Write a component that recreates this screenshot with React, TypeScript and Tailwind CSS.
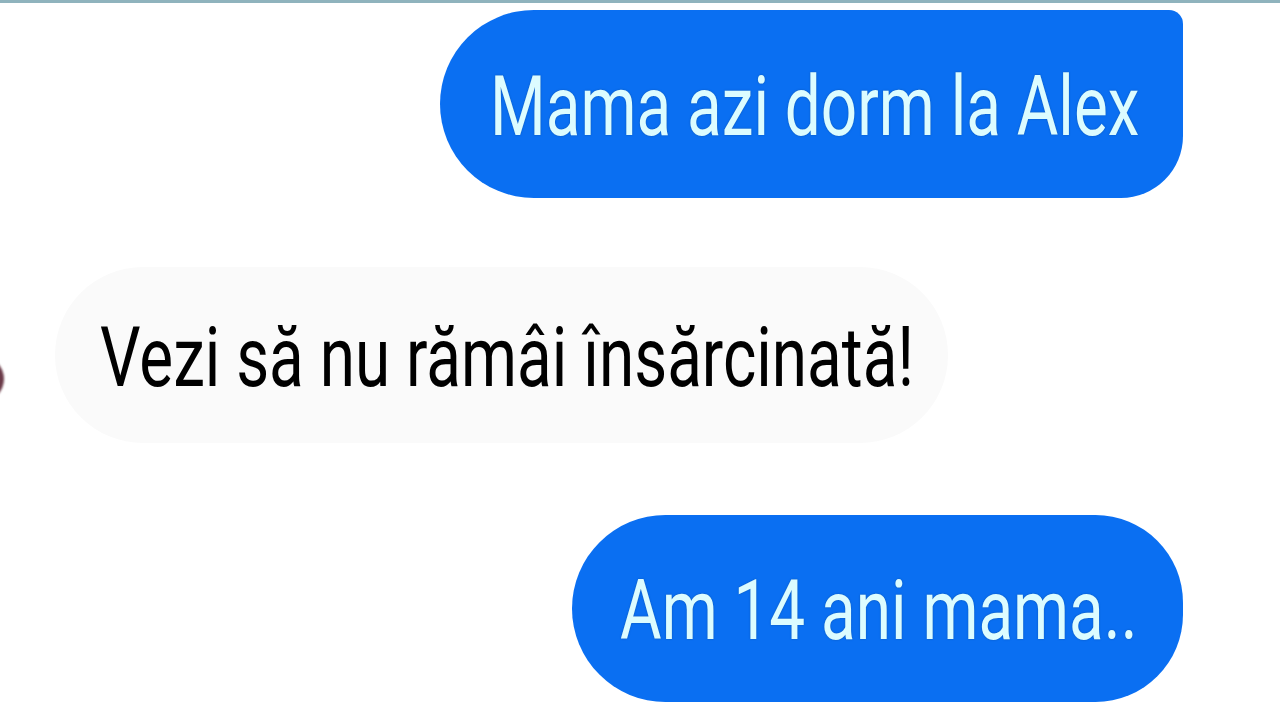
import React from 'react';

const blueText = "inline-block origin-left scale-x-[0.76] whitespace-nowrap text-[84px] leading-none text-[#dcfcff] [text-shadow:0_0_2px_#0a4fa8]";

export default function App() {
  return (
    <div className="relative w-[1280px] h-[720px] overflow-hidden bg-white font-['Roboto','Liberation_Sans',sans-serif]">
      <div className="h-[3px] bg-[#8fb3bd]" />

      {/* avatar sliver on the left edge */}
      <div className="absolute left-[-42px] top-[356px] w-[46px] h-[46px] rounded-full bg-[#6a3a48] blur-[1px]" />

      <div className="flex flex-col pt-[7px]">
        <div className="flex justify-end pr-[97px]">
          <div className="flex items-center w-[743px] h-[188px] pl-[50px] pt-[6px] bg-[#0a6ff2] rounded-l-[94px] rounded-tr-[14px] rounded-br-[62px]">
            <span className={blueText}>Mama azi dorm la Alex</span>
          </div>
        </div>

        <div className="flex justify-start pl-[55px] mt-[69px]">
          <div className="flex items-center w-[893px] h-[176px] pl-[45px] pt-[6px] bg-[#fafafa] rounded-[88px]">
            <span className="inline-block origin-left scale-x-[0.76] whitespace-nowrap text-[84px] leading-none text-black">
              Vezi să nu rămâi însărcinată!
            </span>
          </div>
        </div>

        <div className="flex justify-end pr-[97px] mt-[72px]">
          <div className="flex items-center w-[611px] h-[187px] pl-[48px] pt-[4px] bg-[#0a6ff2] rounded-l-[94px] rounded-r-[88px]">
            <span className={blueText}>Am 14 ani mama..</span>
          </div>
        </div>
      </div>
    </div>
  );
}
